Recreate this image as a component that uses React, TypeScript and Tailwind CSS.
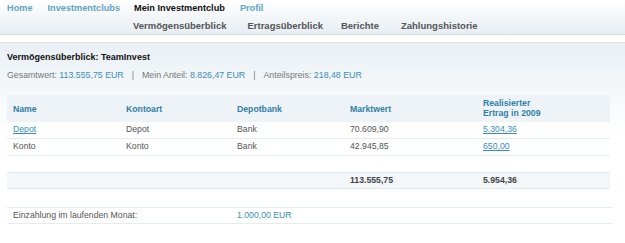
const rows = [
  { name: "Depot", link: true, art: "Depot", bank: "Bank", wert: "70.609,90", ertrag: "5.304,36" },
  { name: "Konto", link: false, art: "Konto", bank: "Bank", wert: "42.945,85", ertrag: "650,00" },
];

const cols = "grid grid-cols-[113px_111px_113px_133px_1fr]";

export default function App() {
  return (
    <div className="h-[243px] w-[625px] overflow-hidden bg-white font-['Liberation_Sans',Arial,sans-serif]">
      <header className="h-[35px] border-b border-[#d5dde3] bg-gradient-to-b from-white to-[#e7eef3]">
        <nav className="flex h-[16px] items-center pt-[2px] pl-[7px] text-[9.2px] font-bold">
          <a className="text-[#5fa3c6]">Home</a>
          <a className="ml-[15px] text-[#5fa3c6]">Investmentclubs</a>
          <a className="ml-[14px] text-[#111]">Mein Investmentclub</a>
          <a className="ml-[15px] text-[#5fa3c6]">Profil</a>
        </nav>
        <nav className="flex h-[18px] items-center pt-[3px] pl-[133px] text-[9.5px] font-bold text-[#555]">
          <a>Vermögensüberblick</a>
          <a className="ml-[21px]">Ertragsüberblick</a>
          <a className="ml-[18px]">Berichte</a>
          <a className="ml-[22px]">Zahlungshistorie</a>
        </nav>
      </header>
      <div className="h-[8px] border-b border-[#dfe3e6] bg-white" />

      <main className="bg-gradient-to-b from-[#e9f0f5] via-white to-white px-[7px] pt-[7px]">
        <h1 className="h-[14px] text-[9px] leading-[14px] font-bold text-[#111]">
          Vermögensüberblick: TeamInvest
        </h1>
        <p className="mt-[4px] h-[14px] text-[8.8px] leading-[14px] text-[#777]">
          Gesamtwert: <span className="text-[#3b8db8]">113.555,75 EUR</span>
          <span className="mx-[8px]">|</span>
          Mein Anteil: <span className="text-[#3b8db8]">8.826,47 EUR</span>
          <span className="mx-[8px]">|</span>
          Anteilspreis: <span className="text-[#3b8db8]">218,48 EUR</span>
        </p>

        <div className="mt-[13px] w-[603px] text-[8.7px] text-[#555]">
          <div className={`${cols} h-[27px] items-center bg-[#eef3f7] font-bold leading-[10px] text-[#2f80a8]`}>
            <div className="pl-[6px]">Name</div>
            <div className="pl-[6px]">Kontoart</div>
            <div className="pl-[6px]">Depotbank</div>
            <div className="pl-[6px]">Marktwert</div>
            <div className="pl-[6px] pb-[2px]">
              Realisierter
              <br />
              Ertrag in 2009
            </div>
          </div>
          {rows.map((r) => (
            <div key={r.name} className={`${cols} h-[17px] items-center border-b border-[#e3ecf2]`}>
              <div className="pl-[6px]">
                {r.link ? <a className="text-[#3b8db8] underline">{r.name}</a> : r.name}
              </div>
              <div className="pl-[6px]">{r.art}</div>
              <div className="pl-[6px]">{r.bank}</div>
              <div className="pl-[6px]">{r.wert}</div>
              <div className="pl-[6px]">
                <a className="text-[#3b8db8] underline">{r.ertrag}</a>
              </div>
            </div>
          ))}

          <div className={`${cols} mt-[16px] h-[17px] items-center border-y border-[#e0eaf1] bg-[#f3f7fa] font-bold text-[#444]`}>
            <div />
            <div />
            <div />
            <div className="pl-[6px]">113.555,75</div>
            <div className="pl-[6px]">5.954,36</div>
          </div>

          <div className={`${cols} mt-[18px] h-[17px] w-[606px] items-center border-y border-[#e3ecf2]`}>
            <div className="col-span-2 pl-[6px]">Einzahlung im laufenden Monat:</div>
            <div className="col-span-3 pl-[6px] text-[#3b8db8]">1.000,00 EUR</div>
          </div>
        </div>
      </main>
    </div>
  );
}
